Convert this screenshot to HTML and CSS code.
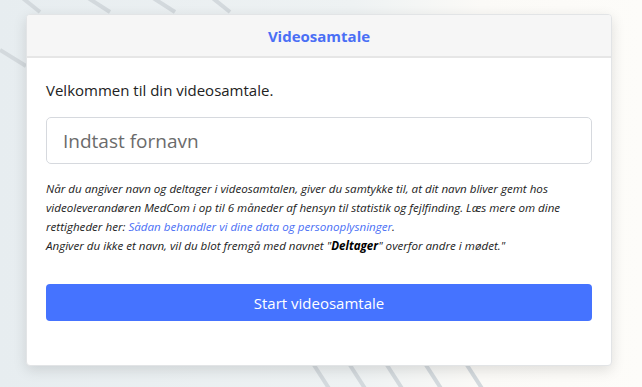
FILE: index.html
```html
<!DOCTYPE html>
<html lang="da">

<head>
    <meta charset="UTF-8">
    <meta name="viewport" content="width=device-width, initial-scale=1.0">
    <title>Videosamtale</title>
    <link rel="stylesheet" href="styles.css">
</head>

<body>
    <!-- Decorative background stripes -->
    <svg class="backdrop" width="642" height="387" viewBox="0 0 642 387">
        <g stroke="#d3d9dd" stroke-width="4" fill="none">
            <line x1="0" y1="-20" x2="40" y2="12" />
            <line x1="60" y1="-20" x2="110" y2="12" />
            <line x1="125" y1="-20" x2="175" y2="12" />
            <line x1="190" y1="-20" x2="230" y2="12" />
            <line x1="0" y1="50" x2="26" y2="66" />
            <line x1="312" y1="362" x2="330" y2="390" />
            <line x1="348" y1="362" x2="366" y2="390" />
            <line x1="385" y1="362" x2="403" y2="390" />
            <line x1="424" y1="362" x2="442" y2="390" />
            <line x1="465" y1="362" x2="483" y2="390" />
        </g>
    </svg>

    <div class="card">
        <div class="card-header">Videosamtale</div>

        <div class="card-body">
            <p class="welcome">Velkommen til din videosamtale.</p>

            <input class="name-input" type="text" placeholder="Indtast fornavn">

            <p class="consent">
                Når du angiver navn og deltager i videosamtalen, giver du samtykke til, at dit navn bliver gemt hos
                videoleverandøren MedCom i op til 6 måneder af hensyn til statistik og fejlfinding. Læs mere om dine
                rettigheder her: <a href="#">Sådan behandler vi dine data og personoplysninger</a>.<br>
                Angiver du ikke et navn, vil du blot fremgå med navnet "<b>Deltager</b>" overfor andre i mødet."
            </p>

            <button class="start-btn" type="button">Start videosamtale</button>
        </div>
    </div>
</body>

</html>
```

FILE: styles.css
```css
/* General Styles */
body {
    font-family: "Open Sans", "Noto Sans", sans-serif;
    background: linear-gradient(to right, #e7edf0 0%, #eef2f3 55%, #fbfaf7 75%, #fdfcf9 100%);
    margin: 0;
    padding: 14px 0 0 26px;
    height: 387px;
    box-sizing: border-box;
    overflow: hidden;
    position: relative;
}

.backdrop {
    position: absolute;
    left: 0;
    top: 0;
}

/* Card */
.card {
    position: relative;
    width: 584px;
    background-color: #fff;
    border: 1px solid #e2e4e6;
    border-radius: 4px;
    box-shadow: 0 4px 14px rgba(0, 0, 0, 0.12);
    overflow: hidden;
}

.card-header {
    background-color: #f6f6f6;
    border-bottom: 2px solid #e6e6e6;
    color: #4a6ff5;
    font-weight: 700;
    font-size: 15px;
    text-align: center;
    height: 41px;
    line-height: 42px;
}

.card-body {
    padding: 22px 19px 44px 19px;
}

.welcome {
    margin: 0 0 17px 0;
    font-size: 15px;
    color: #222;
    line-height: 20px;
}

.name-input {
    display: block;
    width: 100%;
    box-sizing: border-box;
    height: 47px;
    padding: 0 16px;
    font-family: inherit;
    font-size: 19px;
    border: 1px solid #d6d9de;
    border-radius: 5px;
    color: #333;
}

.name-input::placeholder {
    color: #6b6b6b;
}

.consent {
    margin: 15px 0 29px 0;
    font-size: 11.6px;
    font-style: italic;
    line-height: 19px;
    color: #222;
}

.consent a {
    color: #4a6ff5;
    text-decoration: none;
}

.consent b {
    color: #000;
}

.start-btn {
    display: block;
    width: 100%;
    height: 37px;
    font-family: inherit;
    font-size: 15px;
    color: #fff;
    background-color: #4573ff;
    border: none;
    border-radius: 4px;
    cursor: pointer;
}
```
